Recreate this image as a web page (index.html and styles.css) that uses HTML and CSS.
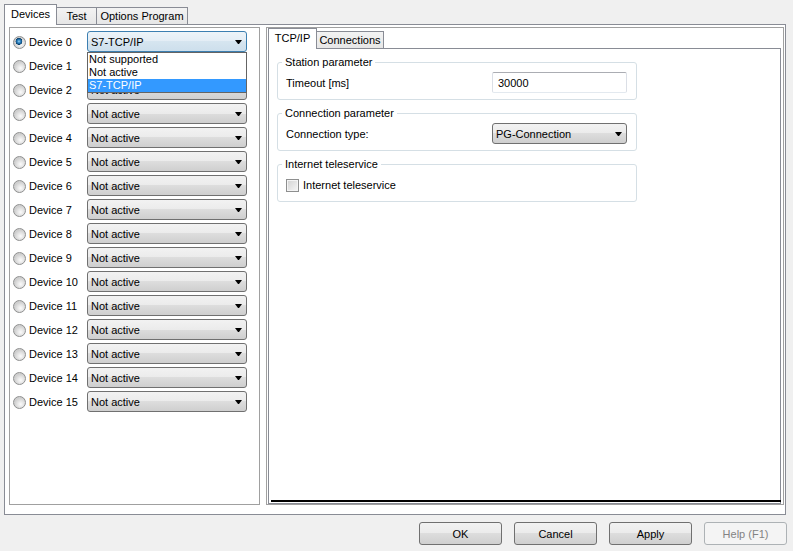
FILE: index.html
```html
<!DOCTYPE html>
<html>
<head>
<meta charset="utf-8">
<link rel="stylesheet" href="styles.css">
</head>
<body>
<div class="dialog">
  <div class="tabstrip outer">
    <div class="tab active t-devices">Devices</div>
    <div class="tab t-test">Test</div>
    <div class="tab t-options">Options Program</div>
  </div>
  <div class="page">
    <div class="split">
      <div class="left">
        <div class="row">
          <span class="radio checked"></span><span class="dev">Device 0</span>
          <div class="combo open"><span>S7-TCP/IP</span><i class="arrow"></i>
            <div class="droplist">
              <div class="item">Not supported</div>
              <div class="item">Not active</div>
              <div class="item sel">S7-TCP/IP</div>
            </div>
          </div>
        </div>
        <div class="row"><span class="radio"></span><span class="dev">Device 1</span><div class="combo"><span>Not active</span><i class="arrow"></i></div></div>
        <div class="row"><span class="radio"></span><span class="dev">Device 2</span><div class="combo"><span>Not active</span><i class="arrow"></i></div></div>
        <div class="row"><span class="radio"></span><span class="dev">Device 3</span><div class="combo"><span>Not active</span><i class="arrow"></i></div></div>
        <div class="row"><span class="radio"></span><span class="dev">Device 4</span><div class="combo"><span>Not active</span><i class="arrow"></i></div></div>
        <div class="row"><span class="radio"></span><span class="dev">Device 5</span><div class="combo"><span>Not active</span><i class="arrow"></i></div></div>
        <div class="row"><span class="radio"></span><span class="dev">Device 6</span><div class="combo"><span>Not active</span><i class="arrow"></i></div></div>
        <div class="row"><span class="radio"></span><span class="dev">Device 7</span><div class="combo"><span>Not active</span><i class="arrow"></i></div></div>
        <div class="row"><span class="radio"></span><span class="dev">Device 8</span><div class="combo"><span>Not active</span><i class="arrow"></i></div></div>
        <div class="row"><span class="radio"></span><span class="dev">Device 9</span><div class="combo"><span>Not active</span><i class="arrow"></i></div></div>
        <div class="row"><span class="radio"></span><span class="dev">Device 10</span><div class="combo"><span>Not active</span><i class="arrow"></i></div></div>
        <div class="row"><span class="radio"></span><span class="dev">Device 11</span><div class="combo"><span>Not active</span><i class="arrow"></i></div></div>
        <div class="row"><span class="radio"></span><span class="dev">Device 12</span><div class="combo"><span>Not active</span><i class="arrow"></i></div></div>
        <div class="row"><span class="radio"></span><span class="dev">Device 13</span><div class="combo"><span>Not active</span><i class="arrow"></i></div></div>
        <div class="row"><span class="radio"></span><span class="dev">Device 14</span><div class="combo"><span>Not active</span><i class="arrow"></i></div></div>
        <div class="row"><span class="radio"></span><span class="dev">Device 15</span><div class="combo"><span>Not active</span><i class="arrow"></i></div></div>
      </div>
      <div class="right">
        <div class="tabstrip inner">
          <div class="tab active t-tcp">TCP/IP</div>
          <div class="tab t-conn">Connections</div>
        </div>
        <div class="tabpage">
          <fieldset class="group">
            <legend>Station parameter</legend>
            <div class="grow">
              <span>Timeout [ms]</span>
              <div class="textbox">30000</div>
            </div>
          </fieldset>
          <fieldset class="group">
            <legend>Connection parameter</legend>
            <div class="grow">
              <span>Connection type:</span>
              <div class="combo small"><span>PG-Connection</span><i class="arrow"></i></div>
            </div>
          </fieldset>
          <fieldset class="group">
            <legend>Internet teleservice</legend>
            <div class="grow check">
              <span class="checkbox"></span><span>Internet teleservice</span>
            </div>
          </fieldset>
          <div class="spacer"></div>
          <div class="hline"></div>
        </div>
      </div>
    </div>
  </div>
  <div class="footer">
    <div class="btn">OK</div>
    <div class="btn">Cancel</div>
    <div class="btn">Apply</div>
    <div class="btn disabled">Help (F1)</div>
  </div>
</div>
</body>
</html>
```
FILE: styles.css
```css
* { box-sizing: border-box; }
html, body { margin: 0; padding: 0; }
body {
  width: 793px;
  height: 551px;
  overflow: hidden;
  background: #f0f0f0;
  font-family: "Liberation Sans", Arial, sans-serif;
  font-size: 11px;
  color: #000;
}
.dialog { padding-top: 4px; display: flex; flex-direction: column; }

/* tabs */
.tabstrip { display: flex; align-items: flex-end; height: 20px; position: relative; z-index: 2; }
.tabstrip.outer { margin-left: 4px; }
.tab {
  height: 17px;
  border: 1px solid #898c95;
  border-bottom: none;
  background: linear-gradient(#f3f3f3, #e6e6e6);
  display: flex;
  align-items: center;
  justify-content: center;
  margin-left: -1px;
  white-space: nowrap;
  padding-bottom: 1px;
}
.tab.active {
  height: 21px;
  margin-bottom: -1px;
  background: #fff;
  position: relative;
  z-index: 3;
  margin-left: 0;
  padding-bottom: 2px;
}
.t-devices { width: 53px; }
.t-test { width: 41px; }
.t-options { width: 92px; }
.t-tcp { width: 49px; }
.t-conn { width: 68px; }

.page {
  margin-left: 4px;
  width: 782px;
  height: 491px;
  border: 1px solid #898c95;
  background: #fff;
  padding: 2px 1px 9px 4px;
}
.split { display: flex; gap: 6px; height: 100%; }

/* left list */
.left {
  width: 251px;
  border: 1px solid #a0a0a0;
  padding: 3px 0 0 3px;
  display: flex;
  flex-direction: column;
  gap: 3px;
}
.row { display: flex; align-items: center; height: 21px; }
.radio {
  width: 13px; height: 13px;
  border-radius: 50%;
  border: 1px solid #8e8f8f;
  background: radial-gradient(circle at 60% 65%, #fbfbfb 0, #e6e6e6 3px, #cfcfcf 6px);
  margin-right: 3px;
  margin-top: 1px;
  flex: none;
}
.radio.checked {
  background:
    radial-gradient(circle at 45% 40%, #9fd6f2 0, #3d8fca 1.3px, #145d96 2.6px, #0d3e66 3.2px, rgba(0,0,0,0) 3.6px),
    radial-gradient(circle at 60% 65%, #fbfbfb 0, #e6e6e6 3px, #cfcfcf 6px);
}
.dev { width: 58px; white-space: nowrap; }
.combo {
  position: relative;
  width: 160px;
  height: 21px;
  border: 1px solid #707070;
  border-radius: 3px;
  background: linear-gradient(#f2f2f2 0%, #ebebeb 50%, #dddddd 50%, #cfcfcf 100%);
  display: flex;
  align-items: center;
  justify-content: space-between;
  padding: 0 4px 0 3px;
  white-space: nowrap;
}
.combo.open {
  border-color: #3c7fb1;
  background: linear-gradient(#edf4f9 0%, #e3edf5 50%, #d6e5f0 50%, #cddfec 100%);
}
.arrow {
  display: block;
  width: 7px;
  height: 0;
  border-left: 3px solid transparent;
  border-right: 3px solid transparent;
  border-top: 4px solid #000;
}
.droplist {
  position: absolute;
  left: -1px;
  top: 20px;
  width: 160px;
  border: 1px solid #646464;
  background: #fff;
  z-index: 5;
}
.item { height: 13px; line-height: 13px; padding-left: 1px; }
.item.sel { background: #3399ff; color: #fff; }

/* right */
.right {
  flex: 1;
  border: 1px solid #a0a0a0;
  padding: 0 2px 0 1px;
  display: flex;
  flex-direction: column;
}
.tabpage {
  flex: 1;
  border: 1px solid #898c95;
  display: flex;
  flex-direction: column;
  padding-top: 7px;
}
.group {
  margin: 0 0 7px 8px;
  width: 360px;
  min-inline-size: 0;
  border: 1px solid #d5dfe5;
  border-radius: 3px;
  padding: 3px 9px 6px 8px;
}
.group legend {
  padding: 0 3px;
  margin-left: -4px;
  line-height: 13px;
  height: 13px;
}
.grow { display: flex; align-items: center; justify-content: space-between; height: 21px; }
.grow.check { justify-content: flex-start; gap: 4px; }
.textbox {
  width: 135px;
  height: 21px;
  border: 1px solid #dbdfe6;
  border-top-color: #abadb3;
  border-bottom-color: #e3e9ef;
  border-radius: 2px;
  padding-left: 5px;
  display: flex;
  align-items: center;
}
.combo.small { width: 135px; padding-left: 3px; }
.checkbox {
  width: 13px; height: 13px;
  border: 1px solid #8e8f8f;
  background: linear-gradient(135deg, #d2d2d2, #f6f6f6);
  box-shadow: inset 0 0 0 1px #f4f4f4;
  margin-top: 1px;
}
.spacer { flex: 1; }
.hline { height: 2px; background: #000; margin: 0 -1px 1px 2px; }

/* footer */
.footer {
  display: flex;
  justify-content: flex-end;
  gap: 12px;
  padding-right: 6px;
  margin-top: 7px;
}
.btn {
  width: 83px;
  height: 23px;
  border: 1px solid #707070;
  border-radius: 3px;
  background: linear-gradient(#f2f2f2 0%, #ebebeb 50%, #dddddd 50%, #cfcfcf 100%);
  display: flex;
  align-items: center;
  justify-content: center;
}
.btn.disabled {
  border-color: #adb2b5;
  background: #f4f4f4;
  color: #838383;
}
```
